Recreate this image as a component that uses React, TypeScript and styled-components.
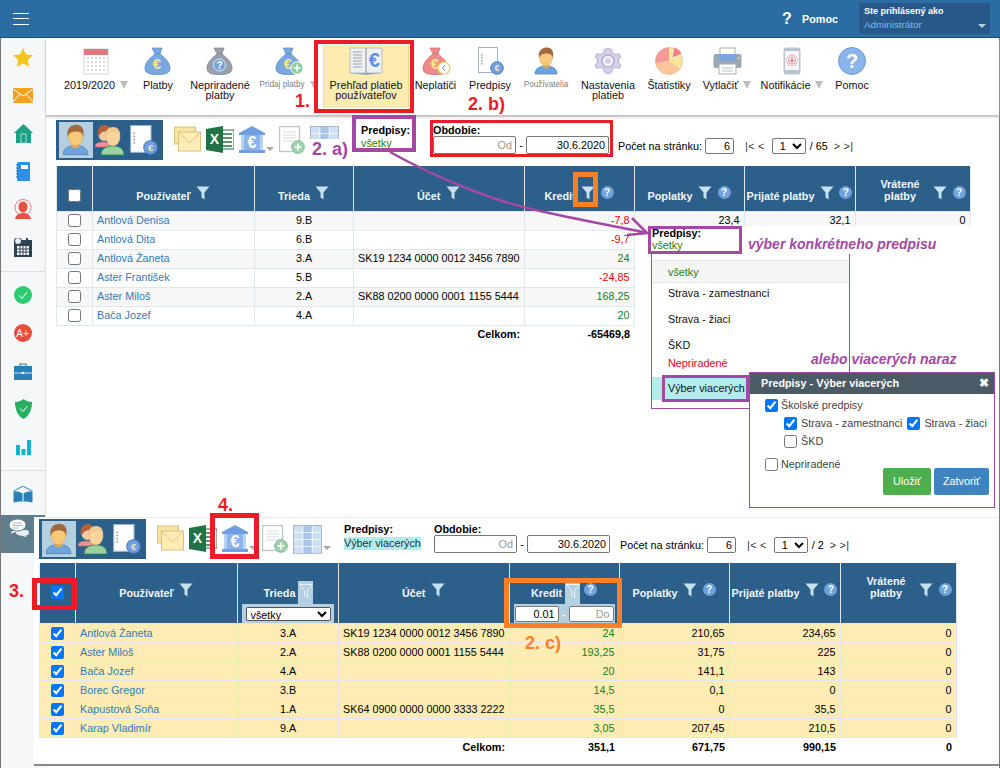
import React from 'react'
import styled, { createGlobalStyle } from 'styled-components'

const GlobalStyle = createGlobalStyle`
  html, body { margin: 0; padding: 0; background: #fff; }
  body { font-family: "Liberation Sans", Arial, sans-serif; font-size: 10.8px; color: #000; }
  * { box-sizing: border-box; }
`

const RED = '#ed1c24'
const PURPLE = '#a349a4'
const ORANGE = '#ff7f27'
const NAVY = '#2c5f8a'
const UI_FONT = '10.8px "Liberation Sans", Arial, sans-serif'

const Page = styled.div`
  position: relative;
  width: 1000px;
  height: 768px;
  overflow: hidden;
  background: #fff;
`

const Header = styled.header`
  height: 38px;
  background: #2b6ca3;
  border-bottom: 1px solid #1f4f7c;
  display: flex;
  align-items: center;
  padding: 0 10px 0 13px;
`

const Burger = styled.div`
  width: 16px;
  height: 12px;
  border-top: 1px solid #fff;
  border-bottom: 1px solid #fff;
  position: relative;
  &::after {
    content: '';
    display: block;
    height: 1px;
    margin-top: 4px;
    background: #fff;
  }
`

const HelpLink = styled.div`
  margin-left: auto;
  display: flex;
  align-items: center;
  color: #fff;
  font-weight: bold;
`

const HelpMark = styled.span`
  font-size: 16px;
  width: 15px;
  margin-right: 5px;
`

const UserBox = styled.div`
  width: 131px;
  height: 31px;
  margin-left: 21px;
  padding: 2px 5px;
  background: #26588a;
  border-radius: 2px;
  position: relative;
  line-height: 13px;
`

const UserTitle = styled.div`
  color: #fff;
  font-weight: bold;
  font-size: 9px;
`

const UserRole = styled.div`
  color: #85b9ea;
  font-size: 9.8px;
`

const UserCaret = styled.span`
  position: absolute;
  right: 4px;
  top: 21px;
  border-left: 4px solid transparent;
  border-right: 4px solid transparent;
  border-top: 4px solid #b9cfe2;
`

const Body = styled.div`
  display: flex;
  height: 730px;
  border-left: 1px solid #777;
  border-right: 1px solid #777;
`

const Sidebar = styled.nav`
  width: 45px;
  flex: none;
  background: #f5f7f9;
  border-right: 1px solid #dfe3e6;
  display: flex;
  flex-direction: column;
`

const SideItem = styled.div<{ $active?: boolean }>`
  height: 38px;
  flex: none;
  display: flex;
  align-items: center;
  justify-content: center;
  ${p => p.$active && `background: #5f7d8c; margin-top: 2px; padding: 0 9px 12px 0;`}
`

const SideRule = styled.div<{ $before: number }>`
  height: 1px;
  flex: none;
  background: #dcdfe2;
  margin: ${p => p.$before}px 0 4px;
`

const Main = styled.main`
  flex: 1;
  min-width: 0;
`

const Toolbar = styled.div`
  height: 77px;
  padding: 7px 0 0 16px;
  display: flex;
  align-items: flex-start;
  background: #fff;
  box-shadow: 0 2px 2px #bbb;
  position: relative;
`

const ToolItem = styled.div<{ $w: number; $active?: boolean }>`
  width: ${p => p.$w}px;
  height: 63px;
  padding-top: 2px;
  flex: none;
  display: flex;
  flex-direction: column;
  align-items: center;
  ${p => p.$active && `background: #fdecb0; border: 1px solid #f0d98c; border-width: 0 1px;`}
`

const ToolIcon = styled.div`
  height: 28px;
  display: flex;
  align-items: center;
  justify-content: center;
`

const ToolLabel = styled.div<{ $small?: boolean }>`
  margin-top: 5px;
  min-height: 10px;
  line-height: 10px;
  text-align: center;
  white-space: pre-line;
  color: ${p => (p.$small ? '#7a7f85' : '#10101a')};
  font-size: ${p => (p.$small ? 8.2 : 10.8)}px;
  display: flex;
  align-items: center;
  gap: 5px;
`

const Caret = styled.span`
  border-left: 4px solid transparent;
  border-right: 4px solid transparent;
  border-top: 8px solid #bdbdbd;
  flex: none;
`

const SmallCaret = styled.span`
  border-left: 4px solid transparent;
  border-right: 4px solid transparent;
  border-top: 4px solid #aaa;
  align-self: flex-end;
  margin: 0 0 4px 1px;
  flex: none;
`

const FirstSection = styled.section`
  height: 402px;
  padding: 5px 0 0 10px;
`

const SecondSection = styled.section`
  position: relative;
  z-index: 2;
  height: 249px;
  width: 965px;
  margin-left: -12px;
  padding: 1px 0 0 5px;
  background: #fff;
  border-top: 1px solid #eee;
  border-bottom: 2px solid #888;
`

const FilterBar = styled.div`
  display: flex;
  align-items: flex-start;
  height: 40px;
`

const ViewGroup = styled.div`
  width: 107px;
  height: 40px;
  background: ${NAVY};
  padding: 2px 3px;
  display: flex;
  flex: none;
`

const ViewTile = styled.div<{ $active?: boolean }>`
  width: 34px;
  height: 36px;
  display: flex;
  align-items: center;
  justify-content: center;
  background: ${p => (p.$active ? '#b4cfdf' : 'transparent')};
`

const ActionStrip = styled.div`
  width: 187px;
  margin: 6px 0 0 11px;
  display: flex;
  gap: 5px;
  flex: none;
`

const ActionIcon = styled.div`
  display: flex;
  align-items: flex-start;
  flex: none;
`

const FieldBlock = styled.div<{ $w: number }>`
  width: ${p => p.$w}px;
  padding-top: 3px;
  flex: none;
  line-height: 14px;
`

const FieldTitle = styled.div`
  font-weight: bold;
`

const FieldValue = styled.div`
  color: #2a7d0c;
  line-height: 12px;
`

const MarkedValue = styled.span`
  background: #b2ecec;
  color: #203040;
  line-height: 13px;
  display: inline-block;
`

const DateRow = styled.div`
  display: flex;
  align-items: center;
  margin-top: -1px;
`

const Dash = styled.span`
  width: 10px;
  text-align: center;
`

const NumInput = styled.input<{ $w: number; $h?: number }>`
  width: ${p => p.$w}px;
  height: ${p => p.$h ?? 18}px;
  border: 1px solid #777;
  border-radius: 2px;
  padding: 0 3px;
  margin: 0;
  text-align: right;
  font: ${UI_FONT};
  color: #000;
  background: #fff;
  &::placeholder { color: #999; opacity: 1; }
`

const Pager = styled.div`
  display: flex;
  align-items: center;
  margin-top: 18px;
  white-space: nowrap;
`

const PagerInput = styled(NumInput)`
  margin: 0 11px 0 3px;
`

const PagerLink = styled.span`
  color: #333;
  letter-spacing: 0.3px;
`

const PageSelect = styled.select`
  width: 34px;
  height: 16px;
  margin: 0 4px 0 7px;
  padding: 0 0 0 3px;
  font: ${UI_FONT};
  border: 1px solid #777;
  border-radius: 2px;
  background: #fff;
`

const Table = styled.table<{ $top: number; $head: number; $gap: number }>`
  border-collapse: collapse;
  table-layout: fixed;
  margin-top: ${p => p.$gap}px;
  th {
    height: ${p => p.$head}px;
    padding: ${p => p.$top}px 0 0;
    vertical-align: top;
    background: ${NAVY};
    color: #f2f7fb;
    font-size: 10.8px;
    line-height: 12px;
    border: 1px solid #dfe8ef;
    border-top: none;
  }
`

const HeadInner = styled.div<{ $wrapped?: boolean }>`
  display: flex;
  align-items: flex-end;
  justify-content: ${p => (p.$wrapped ? 'flex-end' : 'center')};
  gap: 5px;
  height: 14px;
  padding-right: ${p => (p.$wrapped ? 4 : 0)}px;
`

const HeadText = styled.span<{ $wrapped?: boolean }>`
  line-height: ${p => (p.$wrapped ? 12 : 14)}px;
  white-space: ${p => (p.$wrapped ? 'normal' : 'nowrap')};
  ${p => p.$wrapped && `width: 45px; margin: 0 5px 1px 0; text-align: center;`}
`

const FunnelSlot = styled.span<{ $on?: boolean }>`
  display: flex;
  justify-content: center;
  flex: none;
  width: 15px;
  margin-bottom: ${p => (p.$on ? -4 : 3)}px;
  ${p => p.$on && `background: #b4cfdf; height: 23px; padding-top: 3px; margin-left: -2px; margin-right: -1px;`}
`

const HelpDot = styled.span`
  width: 13px;
  height: 13px;
  border-radius: 50%;
  background: #6fa3dd;
  color: #fff;
  font-size: 10px;
  line-height: 13px;
  font-weight: bold;
  text-align: center;
  flex: none;
  margin-bottom: 4px;
`

const FilterBox = styled.div`
  height: 19px;
  margin: 4px 4px 0;
  background: #b4cfdf;
  display: flex;
  align-items: center;
  justify-content: center;
  padding-top: 1px;
`

const FilterSelect = styled.select`
  width: 85px;
  height: 14px;
  padding: 0;
  font: ${UI_FONT};
  line-height: 12px;
  border: 1px solid #555;
  border-radius: 2px;
  background: #fff;
`

const HeadCheck = styled.input`
  margin: 0 0 1px;
  display: block;
`

const Cell = styled.td<{ $align?: string; $tone?: string; $bg?: string }>`
  height: 19px;
  padding: 0 4px;
  line-height: 17px;
  border: 1px solid #dfe8ef;
  white-space: nowrap;
  overflow: hidden;
  text-align: ${p => p.$align ?? 'left'};
  color: ${p => p.$tone ?? '#000'};
  background: ${p => p.$bg ?? 'transparent'};
`

const RowCheck = styled.input`
  display: block;
  margin: 0 auto;
`

const UserLink = styled.a`
  color: #337ab7;
  text-decoration: none;
`

const TotalCell = styled.td`
  height: 18px;
  padding: 0 4px;
  font-weight: bold;
  text-align: right;
`

const Callout = styled.div<{ $x: number; $y: number; $w: number; $h: number; $t: number; $c: string }>`
  position: absolute;
  left: ${p => p.$x}px;
  top: ${p => p.$y}px;
  width: ${p => p.$w}px;
  height: ${p => p.$h}px;
  border: ${p => p.$t}px solid ${p => p.$c};
  z-index: 6;
  pointer-events: none;
`

const Note = styled.div<{ $x: number; $y: number; $c: string; $cover?: boolean }>`
  position: absolute;
  left: ${p => p.$x}px;
  top: ${p => p.$y}px;
  color: ${p => p.$c};
  font-size: 18px;
  line-height: 20px;
  font-weight: bold;
  white-space: nowrap;
  z-index: 7;
  ${p => p.$cover && `background: #fff; padding-left: 3px; margin-left: -3px;`}
`

const ItalicNote = styled.div<{ $x: number; $y: number }>`
  position: absolute;
  left: ${p => p.$x}px;
  top: ${p => p.$y}px;
  color: ${PURPLE};
  font-size: 14px;
  line-height: 16px;
  font-weight: bold;
  font-style: italic;
  white-space: nowrap;
  z-index: 5;
`

const ArrowLayer = styled.svg`
  position: absolute;
  left: 380px;
  top: 145px;
  z-index: 4;
`

const WhiteCover = styled.div`
  position: absolute;
  left: 648px;
  top: 226px;
  width: 330px;
  height: 40px;
  background: #fff;
  z-index: 3;
`

const PickedBox = styled.div`
  position: absolute;
  left: 648px;
  top: 226px;
  width: 94px;
  height: 28px;
  padding: 0 0 0 1px;
  border: 3px solid ${PURPLE};
  background: #fff;
  line-height: 12px;
  z-index: 5;
`

const PickedTitle = styled.div`
  font-weight: bold;
  margin-top: -2px;
`

const Menu = styled.div`
  position: absolute;
  left: 651px;
  top: 254px;
  width: 199px;
  height: 155px;
  padding-top: 6px;
  background: #fff;
  border: 1px solid ${PURPLE};
  border-top: none;
  z-index: 3;
`

const MenuItem = styled.div<{ $tone?: string; $first?: boolean; $tight?: boolean }>`
  height: ${p => (p.$first ? 23 : p.$tight ? 16 : 20)}px;
  line-height: ${p => (p.$first ? 22 : p.$tight ? 16 : 20)}px;
  margin-bottom: ${p => (p.$first ? 0 : 6)}px;
  margin-top: ${p => (p.$tight ? -6 : 0)}px;
  padding-left: 16px;
  color: ${p => p.$tone ?? '#111'};
  ${p => p.$first && `background: #f5f5f5; color: #2a7d0c; border-top: 1px solid #e3e9ee; border-bottom: 1px solid #e3e9ee;`}
`

const MenuPicked = styled.div`
  height: 23px;
  line-height: 23px;
  padding-left: 16px;
  background: #b2ecec;
  color: #111;
`

const Dialog = styled.div`
  position: absolute;
  left: 749px;
  top: 372px;
  width: 246px;
  height: 136px;
  background: #fff;
  border: 1px solid ${PURPLE};
  z-index: 7;
`

const DialogBar = styled.div`
  height: 21px;
  background: #4a5b66;
  color: #fff;
  font-weight: bold;
  line-height: 20px;
  padding: 0 5px 0 11px;
  display: flex;
  justify-content: space-between;
`

const DialogClose = styled.span`
  font-size: 12px;
`

const DialogBody = styled.div`
  padding: 2px 0 0 15px;
  position: relative;
`

const CheckRow = styled.label<{ $indent?: boolean; $gap?: number }>`
  display: flex;
  align-items: center;
  height: 18px;
  color: #444;
  padding-left: ${p => (p.$indent ? 19 : 0)}px;
  margin-bottom: ${p => p.$gap ?? 0}px;
  white-space: nowrap;
`

const DialogCheck = styled.input`
  margin: 0 3px 0 0;
`

const IndentCheck = styled(DialogCheck)`
  margin-right: 4px;
`

const SecondCheck = styled(IndentCheck)`
  margin-left: 5px;
`

const DialogActions = styled.div`
  position: absolute;
  left: 133px;
  top: 74px;
  display: flex;
  gap: 3px;
`

const DialogButton = styled.div<{ $bg: string; $w: number }>`
  width: ${p => p.$w}px;
  height: 27px;
  line-height: 26px;
  text-align: center;
  color: #fff;
  background: ${p => p.$bg};
  border-radius: 2px;
`

/* ---------- drawings ---------- */

const Bag = ({ body, edge, tie, mark, badge }: { body: string; edge: string; tie: string; mark: string; badge?: React.ReactNode }) => (
  <svg width="30" height="28" viewBox="0 0 30 28">
    <path d="M9 1 L19 1 L17 7 L12 7 Z" fill={tie} stroke={edge} strokeWidth="0.7" />
    <path d="M12 7 C6 12 2 16 2 21 C2 26 6 27.5 14.5 27.5 C23 27.5 27 26 27 21 C27 16 23 12 17 7 Z" fill={body} stroke={edge} strokeWidth="0.8" />
    <text x="14" y="22" fontSize="15" fontWeight="bold" textAnchor="middle" fill={mark}>€</text>
    {badge}
  </svg>
)

const BlueBag = () => <Bag body="#7ba7e0" edge="#5f8cc4" tie="#7ba7e0" mark="#f5e58c" />
const GreyBag = () => (
  <svg width="30" height="28" viewBox="0 0 30 28">
    <path d="M9 1 L19 1 L17 7 L12 7 Z" fill="#98a0ad" stroke="#7d8592" strokeWidth="0.7" />
    <path d="M12 7 C6 12 2 16 2 21 C2 26 6 27.5 14.5 27.5 C23 27.5 27 26 27 21 C27 16 23 12 17 7 Z" fill="#98a0ad" stroke="#7d8592" strokeWidth="0.8" />
    <circle cx="14.5" cy="18" r="6" fill="#6fa3dd" stroke="#dfe8f2" />
    <text x="14.5" y="21.5" fontSize="10" fontWeight="bold" textAnchor="middle" fill="#fff">?</text>
  </svg>
)
const PlusBag = () => (
  <Bag body="#7ba7e0" edge="#5f8cc4" tie="#7ba7e0" mark="#f5e58c" badge={
    <g>
      <circle cx="23" cy="21" r="6.2" fill="#8fcf9f" stroke="#fff" />
      <path d="M23 17.5V24.5M19.5 21H26.5" stroke="#fff" strokeWidth="1.6" />
    </g>
  } />
)
const ClockBag = () => (
  <Bag body="#ef8a8a" edge="#cf7070" tie="#ef8a8a" mark="#f5e58c" badge={
    <g>
      <circle cx="23" cy="21" r="6" fill="#fff" stroke="#e9c96a" strokeWidth="1.2" />
      <path d="M24 18L21.5 21L24 24" stroke="#888" fill="none" />
    </g>
  } />
)

const CalendarIcon = () => (
  <svg width="26" height="28" viewBox="0 0 26 28">
    <rect x="1" y="2" width="24" height="25" fill="#fff" stroke="#cfd3d6" />
    <rect x="1" y="2" width="24" height="6" fill="#e0797c" />
    {[11, 15, 19, 23].map(y => [5, 9, 13, 17, 21].map(x => <rect key={x + '-' + y} x={x - 1} y={y - 1} width="2" height="2" fill="#d8d8d8" />))}
  </svg>
)

const LedgerIcon = () => (
  <svg width="34" height="29" viewBox="0 0 34 29">
    <path d="M1 26 L17 28 L33 26 V24 H1 Z" fill="#8fa3b8" />
    <path d="M1 1 H16.5 V26 H1 Z" fill="#eef0f2" stroke="#a5adb5" strokeWidth="0.7" />
    <path d="M17.5 1 H33 V26 H17.5 Z" fill="#eef0f2" stroke="#a5adb5" strokeWidth="0.7" />
    {[5, 8, 11, 14, 17, 20].map(y => <path key={y} d={`M4 ${y}H13`} stroke="#9aa3ad" strokeWidth="1" />)}
    <text x="25.3" y="20" fontSize="20" fontWeight="bold" textAnchor="middle" fill="#5d90d8">€</text>
  </svg>
)

const Coin = ({ cx, cy, r }: { cx: number; cy: number; r: number }) => (
  <g>
    <circle cx={cx} cy={cy} r={r} fill="#6f9fe0" stroke="#4e7fc0" />
    <text x={cx} y={cy + r * 0.5} fontSize={r * 1.4} fontWeight="bold" textAnchor="middle" fill="#f1e9b0">€</text>
  </g>
)

const DocCoinIcon = ({ size = 28 }: { size?: number }) => (
  <svg width={size} height={size} viewBox="0 0 28 28">
    <rect x="2.5" y="0.5" width="19" height="25" fill="#fff" stroke="#9db4cc" />
    {[7, 10, 13, 16].map(y => <rect key={y} x="5" y={y} width="1.5" height="1.5" fill="#9aa3ad" />)}
    <Coin cx={21} cy={21} r={6.3} />
  </svg>
)

const Person = ({ w = 24, h = 28 }: { w?: number; h?: number }) => (
  <svg width={w} height={h} viewBox="0 0 24 28">
    <path d="M1 27 C1 21 6 19 12 19 C18 19 23 21 23 27 Z" fill="#6fa3dd" stroke="#4e7fb8" strokeWidth="0.7" />
    <path d="M8.5 16 H15.5 V20 C14 22 10 22 8.5 20 Z" fill="#d9a860" />
    <ellipse cx="12" cy="11" rx="6.5" ry="8" fill="#f6c97b" stroke="#d9a860" strokeWidth="0.5" />
    <path d="M5 11 C3.5 3 9 0.5 13 0.5 C18 0.5 20 5 19 11 C18 7 15 6 11 6.5 C8 7 6 8 5 11 Z" fill="#a3683c" />
  </svg>
)

const TwoPeopleIcon = () => (
  <svg width="30" height="32" viewBox="0 0 30 32">
    <path d="M0 23 C0 19 4 18 9 18 C14 18 16 20 16 23 Z" fill="#ee8f93" stroke="#d06c70" strokeWidth="0.6" />
    <ellipse cx="9" cy="10" rx="5.5" ry="7" fill="#f6c9a0" />
    <path d="M3 13 C1 4 6 1 10 1 C14 1 16 4 15 9 C12 7 8 7 6 9 C5 10 4 12 3 13 Z" fill="#b5603c" />
    <path d="M6 31 C6 25 11 22 18 22 C25 22 29 25 29 31 Z" fill="#9bd2a0" stroke="#1f8a4c" strokeWidth="0.8" />
    <ellipse cx="18" cy="13" rx="7" ry="9" fill="#f8d49a" stroke="#e2bb7f" strokeWidth="0.5" />
    <path d="M11 13 C9 6 14 3 18 3 C23 3 26 7 25 13 C24 9 21 8 17 8 C14 8 12 10 11 13 Z" fill="#eec98d" />
  </svg>
)

const GearIcon = () => (
  <svg width="28" height="28" viewBox="0 0 28 28">
    <path d="M14 1 L18 3 L18 6 L22 8 L25 6.500 L27 10 L24.500 12 L24.500 16 L27 18 L25 21.500 L22 20 L18 22 L18 25 L14 27 L10 25 L10 22 L6 20 L3 21.500 L1 18 L3.500 16 L3.500 12 L1 10 L3 6.500 L6 8 L10 6 L10 3 Z" fill="#d5cfe8" stroke="#b6adcf" />
    <circle cx="14" cy="14" r="6" fill="#f5f3fa" stroke="#b6adcf" strokeWidth="1.5" />
    <circle cx="14" cy="14" r="3" fill="#d5cfe8" />
  </svg>
)

const PieIcon = () => (
  <svg width="30" height="28" viewBox="0 0 30 28">
    <circle cx="15" cy="14" r="13.500" fill="#fbe79c" stroke="#dca98a" strokeWidth="0.6" />
    <path d="M15 14 L15 0.5 A13.500 13.500 0 0 0 1.700 16 Z" fill="#f59a9a" />
    <path d="M15 14 L1.700 16 A13.500 13.500 0 0 0 26 22 Z" fill="#fbc59a" />
    <path d="M18 11 L20 0 A13.500 13.500 0 0 1 28 7 Z" fill="#f07f85" stroke="#fff" strokeWidth="0.6" />
  </svg>
)

const PrinterIcon = () => (
  <svg width="29" height="28" viewBox="0 0 29 28">
    <rect x="7" y="1" width="15" height="10" fill="#fff" stroke="#a8afb6" />
    <rect x="0.5" y="7" width="28" height="14" rx="2" fill="#9ba7b3" />
    <rect x="6" y="7" width="17" height="7" fill="#7ba7e0" />
    <rect x="6" y="17" width="17" height="10" fill="#fff" stroke="#a8afb6" />
    <path d="M9 21H20M9 24H20" stroke="#b9bfc5" />
    <circle cx="26" cy="11" r="1" fill="#e8e2a0" />
  </svg>
)

const PhoneIcon = () => (
  <svg width="18" height="28" viewBox="0 0 18 28">
    <rect x="0.5" y="0.5" width="17" height="27" rx="3" fill="#b7c3cf" />
    <rect x="2" y="4" width="14" height="19" fill="#f4f6f8" />
    <circle cx="9" cy="13.500" r="5.500" fill="none" stroke="#f3b0b0" />
    <circle cx="9" cy="13.500" r="3.500" fill="none" stroke="#ee8f93" />
    <circle cx="9" cy="13.500" r="1.500" fill="#e56a70" />
  </svg>
)

const BigHelpIcon = () => (
  <svg width="28" height="28" viewBox="0 0 28 28">
    <circle cx="14" cy="14" r="13.500" fill="#8ab4ea" stroke="#6f9ad6" />
    <text x="14" y="21" fontSize="20" fontWeight="bold" textAnchor="middle" fill="#fff">?</text>
  </svg>
)

const MailStack = () => (
  <svg width="27" height="26" viewBox="0 0 27 26">
    <rect x="0.5" y="1" width="21" height="17" fill="#f8e4a5" stroke="#d9c27e" />
    <rect x="4.500" y="6" width="22" height="19" fill="#fdecb5" stroke="#d9c27e" />
    <path d="M4.500 6 L15.500 17 L26.500 6" fill="none" stroke="#d9c27e" />
  </svg>
)

const ExcelIcon = () => (
  <svg width="28" height="27" viewBox="0 0 28 27">
    <rect x="14" y="4" width="14" height="19" fill="#fff" stroke="#217346" />
    <path d="M16 8H26M16 12H26M16 16H26M16 20H26" stroke="#217346" strokeWidth="1.6" />
    <path d="M0 3 L17 0 V27 L0 24 Z" fill="#217346" />
    <text x="8.500" y="18" fontSize="14" fontWeight="bold" textAnchor="middle" fill="#fff">X</text>
  </svg>
)

const BankIcon = () => (
  <svg width="26" height="27" viewBox="0 0 26 27">
    <path d="M13 0 L26 7 V9 H0 V7 Z" fill="#6f9fe0" />
    <rect x="2" y="9" width="22" height="15" fill="#8ab4ea" />
    <rect x="2" y="9" width="3" height="15" fill="#b8d2f2" />
    <rect x="21" y="9" width="3" height="15" fill="#b8d2f2" />
    <rect x="0" y="24" width="26" height="3" fill="#6f9fe0" />
    <text x="13" y="22" fontSize="16" fontWeight="bold" textAnchor="middle" fill="#fff">€</text>
  </svg>
)

const DocPlusIcon = () => (
  <svg width="26" height="28" viewBox="0 0 26 28">
    <rect x="0.5" y="0.5" width="20" height="25" fill="#fff" stroke="#bcc5cc" strokeWidth="1.4" />
    {[6, 9, 12, 15].map(y => <path key={y} d={`M4 ${y}H17`} stroke="#d5dade" />)}
    <circle cx="19" cy="21" r="6.300" fill="#9fd3ac" stroke="#7fb98f" />
    <path d="M19 17.500V24.500M15.500 21H22.500" stroke="#fff" strokeWidth="1.6" />
  </svg>
)

const GridIcon = () => (
  <svg width="29" height="29" viewBox="0 0 29 29">
    <rect x="0.5" y="0.5" width="28" height="28" fill="#fff" stroke="#a8b8c8" />
    {[0, 1, 2, 3].map(r => [0, 1, 2].map(c => (
      <rect key={r + '-' + c} x={1 + c * 9.300} y={1 + r * 7} width="8.500" height="6.300" fill={c === 1 ? '#a9c5ea' : '#cfdff3'} />
    )))}
  </svg>
)

const Funnel = ({ outline }: { outline?: boolean }) => (
  <svg width="14" height="14" viewBox="0 0 14 14">
    <path d="M0.500 0.500 H13.500 L8.500 6.500 V13.500 L5.500 11.500 V6.500 Z" fill={outline ? 'none' : '#c7e0f2'} stroke={outline ? '#e8f2f8' : 'none'} />
  </svg>
)

const Star = () => (
  <svg width="20" height="19" viewBox="0 0 20 19"><path d="M10 0 L13 6.500 L20 7.300 L14.800 12 L16.200 19 L10 15.500 L3.800 19 L5.200 12 L0 7.300 L7 6.500 Z" fill="#f6c51d" /></svg>
)
const SideMail = () => (
  <svg width="20" height="15" viewBox="0 0 20 15"><rect width="20" height="15" fill="#f5a11c" /><path d="M0 1 L10 8 L20 1 M0 14 L7 6 M20 14 L13 6" stroke="#fff" fill="none" /></svg>
)
const SideHome = () => (
  <svg width="19" height="19" viewBox="0 0 19 19"><path d="M9.500 0 L19 9 H17 V19 H2 V9 H0 Z" fill="#19a087" /><rect x="7" y="10" width="5" height="9" fill="none" stroke="#9fdcd0" /></svg>
)
const SideBook = () => (
  <svg width="14" height="19" viewBox="0 0 14 19"><rect x="1" width="13" height="19" rx="1" fill="#2f8fe0" /><rect x="5" y="3" width="7" height="4" fill="#fff" /><path d="M0 3H2M0 6H2M0 9H2M0 12H2M0 15H2" stroke="#1a6cb3" /></svg>
)
const SidePerson = () => (
  <svg width="20" height="20" viewBox="0 0 20 20"><circle cx="10" cy="8.500" r="8" fill="none" stroke="#e85c4f" strokeWidth="0.8" /><ellipse cx="10" cy="8" rx="4.500" ry="5.500" fill="#e8503f" /><path d="M2 20 C3 15 7 14 10 14 C13 14 17 15 18 20 Z" fill="#e8503f" /></svg>
)
const SideCalendar = () => (
  <svg width="18" height="19" viewBox="0 0 18 19"><rect y="2" width="18" height="17" fill="#2e4053" /><rect x="3" y="8" width="12" height="9" fill="#fff" /><path d="M3 11H15M3 14H15M6 8V17M9 8V17M12 8V17" stroke="#2e4053" /><circle cx="4" cy="3" r="3.500" fill="#e8edf0" stroke="#2e4053" /><rect x="12" width="2" height="4" fill="#2e4053" /></svg>
)
const SideCheck = () => (
  <svg width="18" height="18" viewBox="0 0 18 18"><circle cx="9" cy="9" r="9" fill="#2ecc71" /><path d="M5 9.500 L8 12.500 L13 6" stroke="#fff" fill="none" /></svg>
)
const SideGrade = () => (
  <svg width="18" height="18" viewBox="0 0 18 18"><circle cx="9" cy="9" r="9" fill="#e74c3c" /><text x="8.500" y="13" fontSize="10" textAnchor="middle" fill="#fff">A+</text></svg>
)
const SideCase = () => (
  <svg width="18" height="17" viewBox="0 0 18 17"><path d="M6 3 V1 H12 V3" fill="none" stroke="#2980b9" strokeWidth="1.200" /><rect y="3" width="18" height="14" fill="#2980b9" /><path d="M0 10H18" stroke="#cfe3f2" /><circle cx="9" cy="10" r="1.300" fill="#fff" /></svg>
)
const SideShield = () => (
  <svg width="17" height="20" viewBox="0 0 17 20"><path d="M8.500 0 C11 2 14 3 17 3 C17 11 14 17 8.500 20 C3 17 0 11 0 3 C3 3 6 2 8.500 0 Z" fill="#27ae60" /><path d="M5 9.500 L8 12.500 L12.500 7" stroke="#fff" fill="none" /></svg>
)
const SideChart = () => (
  <svg width="15" height="16" viewBox="0 0 15 16"><rect y="6" width="4" height="10" fill="#11b5d1" /><rect x="5.500" y="10" width="4" height="6" fill="#11b5d1" /><rect x="11" y="1" width="4" height="15" fill="#11b5d1" /></svg>
)
const SideOpenBook = () => (
  <svg width="20" height="17" viewBox="0 0 20 17"><path d="M10 0 L19 5 V16 L10 14 L1 16 V5 Z" fill="none" stroke="#2980b9" /><path d="M1 6 C4 5 8 6 10 8 C12 6 16 5 19 6 V16 C16 15 12 15 10 16 C8 15 4 15 1 16 Z" fill="#2980b9" /><path d="M10 8V16" stroke="#fff" /></svg>
)
const SideChat = () => (
  <svg width="20" height="18" viewBox="0 0 20 18"><path d="M6 11 H17 C19 11 20 12 20 14 C20 16 18 16.500 16 16.500 L18 18 C15 18 13 16.500 12 16.500 C8 16.500 6 14 6 11 Z" fill="#e9eef1" /><ellipse cx="8.500" cy="6" rx="8.500" ry="6" fill="#fff" stroke="#5f7d8c" /><path d="M3 12 L2 15 L7 12 Z" fill="#fff" /><path d="M4 4H13M4 6.500H13M4 9H10" stroke="#9fb2bc" /></svg>
)

/* ---------- data ---------- */

const tools: { w: number; label: string; icon: React.ReactNode; caret?: boolean; small?: boolean; active?: boolean }[] = [
  { w: 68, label: '2019/2020', icon: <CalendarIcon />, caret: true },
  { w: 56, label: 'Platby', icon: <BlueBag /> },
  { w: 68, label: 'Nepriradené\nplatby', icon: <GreyBag /> },
  { w: 69, label: 'Pridaj platby', icon: <PlusBag />, small: true, caret: true },
  { w: 86, label: 'Prehľad platieb\npoužívateľov', icon: <LedgerIcon />, active: true },
  { w: 53, label: 'Neplatiči', icon: <ClockBag /> },
  { w: 56, label: 'Predpisy', icon: <DocCoinIcon /> },
  { w: 56, label: 'Používatelia', icon: <Person />, small: true },
  { w: 68, label: 'Nastavenia\nplatieb', icon: <GearIcon /> },
  { w: 54, label: 'Štatistiky', icon: <PieIcon /> },
  { w: 62, label: 'Vytlačiť', icon: <PrinterIcon />, caret: true },
  { w: 68, label: 'Notifikácie', icon: <PhoneIcon />, caret: true },
  { w: 52, label: 'Pomoc', icon: <BigHelpIcon /> },
]

const firstRows = [
  { name: 'Antlová Denisa', cls: '9.B', acc: '', credit: '-7,8', rest: ['23,4', '32,1', '0'] },
  { name: 'Antlová Dita', cls: '6.B', acc: '', credit: '-9,7' },
  { name: 'Antlová Žaneta', cls: '3.A', acc: 'SK19 1234 0000 0012 3456 7890', credit: '24' },
  { name: 'Aster František', cls: '5.B', acc: '', credit: '-24,85' },
  { name: 'Aster Miloš', cls: '2.A', acc: 'SK88 0200 0000 0001 1155 5444', credit: '168,25' },
  { name: 'Bača Jozef', cls: '4.A', acc: '', credit: '20' },
]

const secondRows = [
  { name: 'Antlová Žaneta', cls: '3.A', acc: 'SK19 1234 0000 0012 3456 7890', credit: '24', rest: ['210,65', '234,65', '0'] },
  { name: 'Aster Miloš', cls: '2.A', acc: 'SK88 0200 0000 0001 1155 5444', credit: '193,25', rest: ['31,75', '225', '0'] },
  { name: 'Bača Jozef', cls: '4.A', acc: '', credit: '20', rest: ['141,1', '143', '0'] },
  { name: 'Borec Gregor', cls: '3.B', acc: '', credit: '14,5', rest: ['0,1', '0', '0'] },
  { name: 'Kapustová Soňa', cls: '1.A', acc: 'SK64 0900 0000 0000 3333 2222', credit: '35,5', rest: ['0', '35,5', '0'] },
  { name: 'Karap Vladimír', cls: '9.A', acc: '', credit: '3,05', rest: ['207,45', '210,5', '0'] },
]

const firstCols = [36, 162, 99, 170, 110, 110, 111, 115]
const secondCols = [36, 162, 101, 169, 110, 110, 111, 116]

const creditTone = (v: string) => (v.startsWith('-') ? '#f00000' : '#14801c')

/* ---------- parts ---------- */

const Tools = () => (
  <Toolbar>
    {tools.map(t => (
      <ToolItem key={t.label} $w={t.w} $active={t.active}>
        <ToolIcon>{t.icon}</ToolIcon>
        <ToolLabel $small={t.small}>
          <span>{t.label}</span>
          {t.caret && <Caret />}
        </ToolLabel>
      </ToolItem>
    ))}
  </Toolbar>
)

const Filters = ({ pages, picked, predWidth, dateWidth }: { pages: string; picked?: boolean; predWidth: number; dateWidth: number }) => (
  <FilterBar>
    <ViewGroup>
      <ViewTile $active><Person w={27} h={32} /></ViewTile>
      <ViewTile><TwoPeopleIcon /></ViewTile>
      <ViewTile><DocCoinIcon size={30} /></ViewTile>
    </ViewGroup>
    <ActionStrip>
      <ActionIcon><MailStack /></ActionIcon>
      <ActionIcon><ExcelIcon /></ActionIcon>
      <ActionIcon><BankIcon /><SmallCaret /></ActionIcon>
      <ActionIcon><DocPlusIcon /></ActionIcon>
      <ActionIcon><GridIcon />{picked && <SmallCaret />}</ActionIcon>
    </ActionStrip>
    <FieldBlock $w={predWidth}>
      <FieldTitle>Predpisy:</FieldTitle>
      {picked ? <MarkedValue>Výber viacerých</MarkedValue> : <FieldValue>všetky</FieldValue>}
    </FieldBlock>
    <FieldBlock $w={dateWidth}>
      <FieldTitle>Obdobie:</FieldTitle>
      <DateRow>
        <NumInput $w={83} placeholder="Od" readOnly />
        <Dash>-</Dash>
        <NumInput $w={83} defaultValue="30.6.2020" readOnly />
      </DateRow>
    </FieldBlock>
    <Pager>
      <span>Počet na stránku:</span>
      <PagerInput $w={29} $h={16} defaultValue="6" readOnly />
      <PagerLink>|&lt; &lt;</PagerLink>
      <PageSelect defaultValue="1"><option value="1">1</option></PageSelect>
      <span>/ {pages}&nbsp;&nbsp;</span>
      <PagerLink>&gt; &gt;|</PagerLink>
    </Pager>
  </FilterBar>
)

const HeadLabel = ({ text, funnel = true, help, on, wrapped }: { text: string; funnel?: boolean; help?: boolean; on?: boolean; wrapped?: boolean }) => (
  <HeadInner $wrapped={wrapped}>
    <HeadText $wrapped={wrapped}>{text}</HeadText>
    {funnel && <FunnelSlot $on={on}><Funnel outline={on} /></FunnelSlot>}
    {help && <HelpDot>?</HelpDot>}
  </HeadInner>
)

const Cols = ({ widths }: { widths: number[] }) => (
  <colgroup>
    {widths.map((w, i) => <col key={i} width={w} />)}
  </colgroup>
)

const FirstTable = () => (
  <Table $top={23} $head={45} $gap={6}>
    <Cols widths={firstCols} />
    <thead>
      <tr>
        <th><HeadInner><HeadCheck type="checkbox" readOnly /></HeadInner></th>
        <th><HeadLabel text="Používateľ" /></th>
        <th><HeadLabel text="Trieda" /></th>
        <th><HeadLabel text="Účet" /></th>
        <th><HeadLabel text="Kredit" help /></th>
        <th><HeadLabel text="Poplatky" help /></th>
        <th><HeadLabel text="Prijaté platby" help /></th>
        <th><HeadLabel text="Vrátené platby" help wrapped /></th>
      </tr>
    </thead>
    <tbody>
      {firstRows.map((r, i) => {
        const bg = i % 2 === 0 ? '#f7f7f7' : '#fff'
        return (
          <tr key={r.name}>
            <Cell $bg={bg}><RowCheck type="checkbox" readOnly /></Cell>
            <Cell $bg={bg}><UserLink href="#">{r.name}</UserLink></Cell>
            <Cell $bg={bg} $align="center">{r.cls}</Cell>
            <Cell $bg={bg}>{r.acc}</Cell>
            <Cell $bg={bg} $align="right" $tone={creditTone(r.credit)}>{r.credit}</Cell>
            {r.rest?.map((v, k) => <Cell key={k} $bg={bg} $align="right">{v}</Cell>)}
          </tr>
        )
      })}
      <tr>
        <TotalCell colSpan={4}>Celkom:</TotalCell>
        <TotalCell>-65469,8</TotalCell>
      </tr>
    </tbody>
  </Table>
)

const SecondTable = () => (
  <Table $top={23} $head={60} $gap={4}>
    <Cols widths={secondCols} />
    <thead>
      <tr>
        <th><HeadInner><HeadCheck type="checkbox" defaultChecked readOnly /></HeadInner></th>
        <th><HeadLabel text="Používateľ" /></th>
        <th>
          <HeadLabel text="Trieda" on />
          <FilterBox>
            <FilterSelect defaultValue="v"><option value="v">všetky</option></FilterSelect>
          </FilterBox>
        </th>
        <th><HeadLabel text="Účet" /></th>
        <th>
          <HeadLabel text="Kredit" help on />
          <FilterBox>
            <NumInput $w={44} $h={16} defaultValue="0.01" readOnly />
            <Dash>-</Dash>
            <NumInput $w={45} $h={16} placeholder="Do" readOnly />
          </FilterBox>
        </th>
        <th><HeadLabel text="Poplatky" help /></th>
        <th><HeadLabel text="Prijaté platby" help /></th>
        <th><HeadLabel text="Vrátené platby" help wrapped /></th>
      </tr>
    </thead>
    <tbody>
      {secondRows.map(r => (
        <tr key={r.name}>
          <Cell $bg="#fdecb3"><RowCheck type="checkbox" defaultChecked readOnly /></Cell>
          <Cell $bg="#fdecb3"><UserLink href="#">{r.name}</UserLink></Cell>
          <Cell $bg="#fdecb3" $align="center">{r.cls}</Cell>
          <Cell $bg="#fdecb3">{r.acc}</Cell>
          <Cell $bg="#fdecb3" $align="right" $tone={creditTone(r.credit)}>{r.credit}</Cell>
          {r.rest.map((v, k) => <Cell key={k} $bg="#fdecb3" $align="right">{v}</Cell>)}
        </tr>
      ))}
      <tr>
        <TotalCell colSpan={4}>Celkom:</TotalCell>
        <TotalCell>351,1</TotalCell>
        <TotalCell>671,75</TotalCell>
        <TotalCell>990,15</TotalCell>
        <TotalCell>0</TotalCell>
      </tr>
    </tbody>
  </Table>
)

const Annotations = () => (
  <>
    <Callout $x={314} $y={40} $w={100} $h={73} $t={4} $c={RED} />
    <Callout $x={430} $y={120} $w={183} $h={37} $t={3} $c={RED} />
    <Callout $x={352} $y={115} $w={64} $h={37} $t={4} $c={PURPLE} />
    <Callout $x={573} $y={172} $w={25} $h={35} $t={5} $c={ORANGE} />
    <Callout $x={32} $y={578} $w={45} $h={32} $t={5} $c={RED} />
    <Callout $x={210} $y={513} $w={49} $h={46} $t={5} $c={RED} />
    <Callout $x={504} $y={578} $w={118} $h={50} $t={5} $c={ORANGE} />
    <Callout $x={662} $y={375} $w={87} $h={27} $t={3} $c={PURPLE} />

    <Note $x={295} $y={91} $c={RED}>1.</Note>
    <Note $x={468} $y={94} $c={RED}>2. b)</Note>
    <Note $x={312} $y={139} $c={PURPLE} $cover>2. a)</Note>
    <Note $x={9} $y={581} $c={RED}>3.</Note>
    <Note $x={218} $y={495} $c={RED}>4.</Note>
    <Note $x={525} $y={633} $c={ORANGE}>2. c)</Note>
    <ItalicNote $x={748} $y={236}>výber konkrétneho predpisu</ItalicNote>
    <ItalicNote $x={811} $y={351}>alebo viacerých naraz</ItalicNote>

    <WhiteCover />
    <ArrowLayer width="275" height="100" viewBox="0 0 275 100">
      <path d="M10 7 C60 35 120 58 160 66 C200 75 240 82 267 88" fill="none" stroke={PURPLE} strokeWidth="2.5" />
      <path d="M252 73 L267 88 L247 90" fill="none" stroke={PURPLE} strokeWidth="2.5" />
    </ArrowLayer>
    <PickedBox>
      <PickedTitle>Predpisy:</PickedTitle>
      <FieldValue>všetky</FieldValue>
    </PickedBox>

    <Menu>
      <MenuItem $first>všetky</MenuItem>
      <MenuItem>Strava - zamestnanci</MenuItem>
      <MenuItem>Strava - žiaci</MenuItem>
      <MenuItem>ŠKD</MenuItem>
      <MenuItem $tight $tone="#f00020">Nepriradené</MenuItem>
      <MenuPicked>Výber viacerých</MenuPicked>
    </Menu>

    <Dialog>
      <DialogBar>
        <span>Predpisy - Výber viacerých</span>
        <DialogClose>✖</DialogClose>
      </DialogBar>
      <DialogBody>
        <CheckRow><DialogCheck type="checkbox" defaultChecked readOnly />Školské predpisy</CheckRow>
        <CheckRow $indent>
          <IndentCheck type="checkbox" defaultChecked readOnly />Strava - zamestnanci
          <SecondCheck type="checkbox" defaultChecked readOnly />Strava - žiaci
        </CheckRow>
        <CheckRow $indent $gap={5}><IndentCheck type="checkbox" readOnly />ŠKD</CheckRow>
        <CheckRow><DialogCheck type="checkbox" readOnly />Nepriradené</CheckRow>
        <DialogActions>
          <DialogButton $bg="#4cae4c" $w={48}>Uložiť</DialogButton>
          <DialogButton $bg="#3f84bf" $w={55}>Zatvoriť</DialogButton>
        </DialogActions>
      </DialogBody>
    </Dialog>
  </>
)

export default function App() {
  return (
    <Page>
      <GlobalStyle />
      <Header>
        <Burger />
        <HelpLink><HelpMark>?</HelpMark>Pomoc</HelpLink>
        <UserBox>
          <UserTitle>Ste prihlásený ako</UserTitle>
          <UserRole>Administrátor</UserRole>
          <UserCaret />
        </UserBox>
      </Header>
      <Body>
        <Sidebar>
          <SideItem><Star /></SideItem>
          <SideItem><SideMail /></SideItem>
          <SideItem><SideHome /></SideItem>
          <SideItem><SideBook /></SideItem>
          <SideItem><SidePerson /></SideItem>
          <SideItem><SideCalendar /></SideItem>
          <SideRule $before={5} />
          <SideItem><SideCheck /></SideItem>
          <SideItem><SideGrade /></SideItem>
          <SideItem><SideCase /></SideItem>
          <SideItem><SideShield /></SideItem>
          <SideItem><SideChart /></SideItem>
          <SideRule $before={4} />
          <SideItem><SideOpenBook /></SideItem>
          <SideItem $active><SideChat /></SideItem>
        </Sidebar>
        <Main>
          <Tools />
          <FirstSection>
            <Filters pages="65" predWidth={72} dateWidth={185} />
            <FirstTable />
          </FirstSection>
          <SecondSection>
            <Filters pages="2" picked predWidth={90} dateWidth={186} />
            <SecondTable />
          </SecondSection>
        </Main>
      </Body>
      <Annotations />
    </Page>
  )
}
